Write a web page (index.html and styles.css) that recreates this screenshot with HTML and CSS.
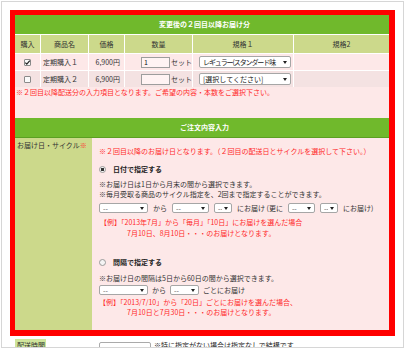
FILE: index.html
```html
<!DOCTYPE html>
<html>
<head>
    <meta charset="utf-8">
    <title>定期購入 内容変更</title>
    <link rel="stylesheet" href="styles.css">
</head>
<body>
<div class="frame">
    <div class="highlight">
        <div class="bar">変更後の２回目以降お届け分</div>
        <div class="grid head">
            <div>購入</div>
            <div>商品名</div>
            <div>価格</div>
            <div>数量</div>
            <div>規格１</div>
            <div>規格2</div>
        </div>
        <div class="grid item">
            <div class="center">
                <span class="check"><svg width="7" height="7" viewBox="0 0 7 7"><polyline points="1.3,3.6 2.8,5.1 5.8,1.6" fill="none" stroke="#222" stroke-width="1.2"/></svg></span>
            </div>
            <div class="name">定期購入１</div>
            <div class="price">6,900円</div>
            <div class="qty"><span class="qty-input">1</span>セット</div>
            <div class="spec"><span class="select sel-spec"><span class="sel-text narrow">レギュラー(スタンダード味</span><span class="arrow"></span></span></div>
            <div></div>
        </div>
        <div class="grid item alt">
            <div class="center"><span class="check"></span></div>
            <div class="name">定期購入２</div>
            <div class="price">6,900円</div>
            <div class="qty"><span class="qty-input"></span>セット</div>
            <div class="spec"><span class="select sel-spec"><span class="sel-text">[選択してください]</span><span class="arrow"></span></span></div>
            <div></div>
        </div>
        <div class="note red">※２回目以降配送分の入力項目となります。ご希望の内容・本数をご選択下さい。</div>

        <div class="bar bar-2">ご注文内容入力</div>
        <div class="order">
            <div class="label">お届け日・サイクル<span class="red">※</span></div>
            <div class="content">
                <div class="red lead">※２回目以降のお届け日となります。（２回目の配送日とサイクルを選択して下さい。）</div>

                <div class="choice first-choice"><span class="radio on"></span><b>日付で指定する</b></div>
                <div class="line gap-5">※お届け日は1日から月末の間から選択できます。</div>
                <div class="line">※毎月受取る商品のサイクル指定を、2回まで指定することができます。</div>
                <div class="pickers gap-4">
                    <span class="select s49"><span class="sel-text">--</span><span class="arrow"></span></span>
                    <span>から</span>
                    <span class="select s37"><span class="sel-text">--</span><span class="arrow"></span></span>
                    <span class="select s18"><span class="sel-text">--</span><span class="arrow"></span></span>
                    <span>にお届け (更に</span>
                    <span class="select s27"><span class="sel-text">--</span><span class="arrow"></span></span>
                    <span class="select s18"><span class="sel-text">--</span><span class="arrow"></span></span>
                    <span>にお届け)</span>
                </div>
                <div class="red example gap-4">【例】「2013年7月」から「毎月」「10日」にお届けを選んだ場合</div>
                <div class="red example indent">7月10日、8月10日・・・のお届けとなります。</div>

                <div class="choice second-choice"><span class="radio"></span><b>間隔で指定する</b></div>
                <div class="line gap-6">※お届け日の間隔は5日から60日の間から選択できます。</div>
                <div class="pickers tight gap-2">
                    <span class="select s49"><span class="sel-text">--</span><span class="arrow"></span></span>
                    <span>から</span>
                    <span class="select s29"><span class="sel-text">--</span><span class="arrow"></span></span>
                    <span>ごとにお届け</span>
                </div>
                <div class="red line gap-2">【例】「2013/7/10」から「20日」ごとにお届けを選んだ場合、</div>
                <div class="red line indent">7月10日と7月30日・・・のお届けとなります。</div>
            </div>
        </div>
    </div>

    <div class="below">
        <span class="below-label">配送時間</span>
        <span class="below-input"></span>
        <span class="below-text">※特に指定がない場合は指定なしで結構です</span>
    </div>
</div>
</body>
</html>
```

FILE: styles.css
```css
* {
    box-sizing: border-box;
}

body {
    margin: 0;
    background: #fff;
    color: #333;
    font-family: "Noto Sans CJK JP", "Noto Sans", sans-serif;
    font-size: 7px;
    line-height: 10px;
}

.frame {
    margin: 1px;
    width: 403px;
    height: 347px;
    border: 1px solid #d6d6d6;
    padding: 8px 0 0 8px;
    overflow: hidden;
}

/* red highlight box round the order table */
.highlight {
    width: 385px;
    border-style: solid;
    border-color: #ff0000;
    border-width: 5px 6px 6px 5px;
    background: #fde8e8;
}

.red {
    color: #ff2a2a;
}

/* green title bars */
.bar {
    height: 19px;
    line-height: 19px;
    padding-left: 5px;
    background: #70b92c;
    color: #fff;
    font-weight: bold;
    text-align: center;
}

.bar-2 {
    height: 20px;
    border-bottom: 1px solid #5b9f22;
}

/* product rows */
.grid {
    display: grid;
    grid-template-columns: 25px 48px 36px 68px 101px 1fr;
    border-top: 1px solid #fff;
}

.grid > div {
    display: flex;
    align-items: center;
    border-left: 1px solid #fff;
}

.grid > div:first-child {
    border-left: none;
}

.head {
    height: 19px;
    background: #ccd98b;
}

.head > div {
    justify-content: center;
}

.item {
    height: 17px;
    background: #fde8e8;
}

.item.alt {
    background: #f4e2e2;
}

.center {
    justify-content: center;
}

.name {
    padding-left: 2px;
}

.price {
    justify-content: flex-end;
    padding-right: 4px;
}

.qty {
    padding-left: 16px;
}

.qty-input {
    width: 29px;
    height: 11px;
    margin-right: 1px;
    padding-left: 2px;
    border: 1px solid #9d9d9d;
    background: #fff3f3;
    line-height: 9px;
    color: #111;
}

.spec {
    padding-left: 6px;
}

.check {
    display: inline-block;
    width: 7px;
    height: 7px;
    border: 1px solid #8a8a8a;
    border-radius: 1px;
    background: #fafafa;
    position: relative;
}

.check svg {
    position: absolute;
    left: -1px;
    top: -1px;
}

/* select boxes */
.select {
    display: inline-flex;
    align-items: center;
    height: 10px;
    padding: 0 3px;
    border: 1px solid #a6a6a6;
    border-radius: 2px;
    background: #fff;
    color: #555;
    line-height: 8px;
    white-space: nowrap;
}

.sel-text {
    flex: 1;
    overflow: hidden;
}

.sel-text.narrow {
    letter-spacing: -1.1px;
}

.arrow {
    flex-shrink: 0;
    margin-left: 2px;
    width: 0;
    height: 0;
    border-left: 2px solid transparent;
    border-right: 2px solid transparent;
    border-top: 3px solid #222;
}

.sel-spec {
    width: 92px;
    height: 12px;
    line-height: 10px;
    color: #222;
}

.s49 { width: 49px; }
.s37 { width: 37px; }
.s29 { width: 29px; }
.s27 { width: 27px; }
.s18 { width: 18px; }

.note {
    height: 31px;
    padding-left: 1px;
}

/* delivery day section */
.order {
    display: grid;
    grid-template-columns: 77px 1fr;
    height: 192px;
}

.label {
    background: #ccd98b;
    padding: 2px 0 0 2px;
}

.content {
    padding: 8px 0 0 7px;
}

.choice {
    display: flex;
    align-items: center;
    height: 10px;
    color: #222;
}

.first-choice {
    margin-top: 8px;
}

.second-choice {
    margin-top: 18px;
}

.radio {
    display: inline-block;
    width: 7px;
    height: 7px;
    margin-right: 7px;
    border: 1px solid #9a9a9a;
    border-radius: 50%;
    background: #f4f4f4;
}

.radio.on {
    background: radial-gradient(circle, #333 0, #333 1.4px, #f4f4f4 1.8px);
}

.pickers {
    display: flex;
    align-items: center;
    gap: 5px;
    height: 10px;
}

.pickers.tight {
    gap: 4px;
}

.example {
    line-height: 11px;
    padding-left: 1px;
}

.indent {
    padding-left: 28px;
}

.gap-2 { margin-top: 2px; }
.gap-4 { margin-top: 4px; }
.gap-5 { margin-top: 5px; }
.gap-6 { margin-top: 6px; }

/* next row, below the highlight */
.below {
    display: flex;
    align-items: flex-start;
    margin: 3px 0 0 5px;
}

.below-label {
    width: 31px;
    height: 12px;
    padding: 1px 0 0 2px;
    background: #cfe59b;
    color: #333;
}

.below-input {
    width: 52px;
    height: 10px;
    margin: 3px 0 0 53px;
    border: 1px solid #aaa;
    border-radius: 2px;
    background: #fff;
}

.below-text {
    margin: 1px 0 0 3px;
    color: #222;
}
```
